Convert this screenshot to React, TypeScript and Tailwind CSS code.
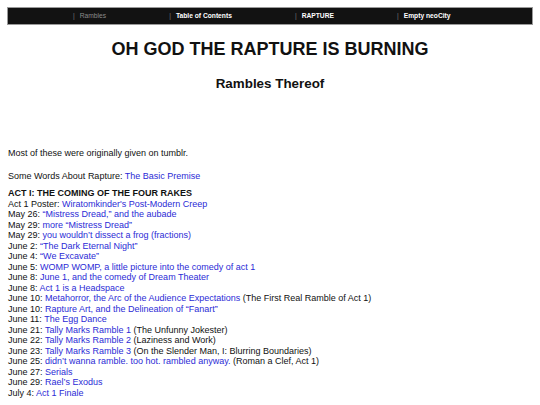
const links = "text-[#2b2bd6]";

type Row = { date: string; link: string; note?: string };

const rows: Row[] = [
  { date: "Act 1 Poster", link: "Wiratomkinder's Post-Modern Creep" },
  { date: "May 26", link: "\u201cMistress Dread,\u201d and the aubade" },
  { date: "May 29", link: "more \u201cMistress Dread\u201d" },
  { date: "May 29", link: "you wouldn\u2019t dissect a frog (fractions)" },
  { date: "June 2", link: "\u201cThe Dark Eternal Night\u201d" },
  { date: "June 4", link: "\u201cWe Excavate\u201d" },
  { date: "June 5", link: "WOMP WOMP, a little picture into the comedy of act 1" },
  { date: "June 8", link: "June 1, and the comedy of Dream Theater" },
  { date: "June 8", link: "Act 1 is a Headspace" },
  {
    date: "June 10",
    link: "Metahorror, the Arc of the Audience Expectations",
    note: "(The First Real Ramble of Act 1)",
  },
  { date: "June 10", link: "Rapture Art, and the Delineation of \u201cFanart\u201d" },
  { date: "June 11", link: "The Egg Dance" },
  { date: "June 21", link: "Tally Marks Ramble 1", note: "(The Unfunny Jokester)" },
  { date: "June 22", link: "Tally Marks Ramble 2", note: "(Laziness and Work)" },
  {
    date: "June 23",
    link: "Tally Marks Ramble 3",
    note: "(On the Slender Man, I: Blurring Boundaries)",
  },
  {
    date: "June 25",
    link: "didn\u2019t wanna ramble. too hot. rambled anyway.",
    note: "(Roman a Clef, Act 1)",
  },
  { date: "June 27", link: "Serials" },
  { date: "June 29", link: "Rael\u2019s Exodus" },
  { date: "July 4", link: "Act 1 Finale" },
];

const nav = [
  { label: "Rambles", current: true },
  { label: "Table of Contents" },
  { label: "RAPTURE" },
  { label: "Empty neoCity" },
];

export default function App() {
  return (
    <div className="min-h-[405px] w-[540px] bg-white pt-[7px] font-['Liberation_Sans',Arial,sans-serif] text-[#111]">
      <nav className="mx-[7px] flex h-[18px] items-center gap-[63px] border border-[#9a9a9a] bg-[#121212] pl-[65px] text-[6.7px]">
        {nav.map((item) => (
          <span key={item.label} className="flex items-center">
            <span className="mr-[5px] text-[#777]">|</span>
            <span className={item.current ? "text-[#8a8a8a]" : "font-bold text-white"}>
              {item.label}
            </span>
          </span>
        ))}
      </nav>

      <h1 className="mt-[14px] text-center text-[18px] font-bold leading-[1.15]">
        OH GOD THE RAPTURE IS BURNING
      </h1>
      <h2 className="mt-[16px] text-center text-[13.4px] font-bold leading-[1.15]">
        Rambles Thereof
      </h2>

      <div className="px-[8px] text-[9px] leading-[10.5px]">
        <p className="mt-[57px]">Most of these were originally given on tumblr.</p>
        <p className="mt-[12.5px]">
          Some Words About Rapture: <a className={links}>The Basic Premise</a>
        </p>
        <div className="mt-[6.5px]">
          <div className="font-bold">ACT I: THE COMING OF THE FOUR RAKES</div>
          {rows.map((r, i) => (
            <div key={i} className="whitespace-nowrap">
              {r.date}: <a className={links}>{r.link}</a>
              {r.note ? ` ${r.note}` : ""}
            </div>
          ))}
        </div>
      </div>
    </div>
  );
}
